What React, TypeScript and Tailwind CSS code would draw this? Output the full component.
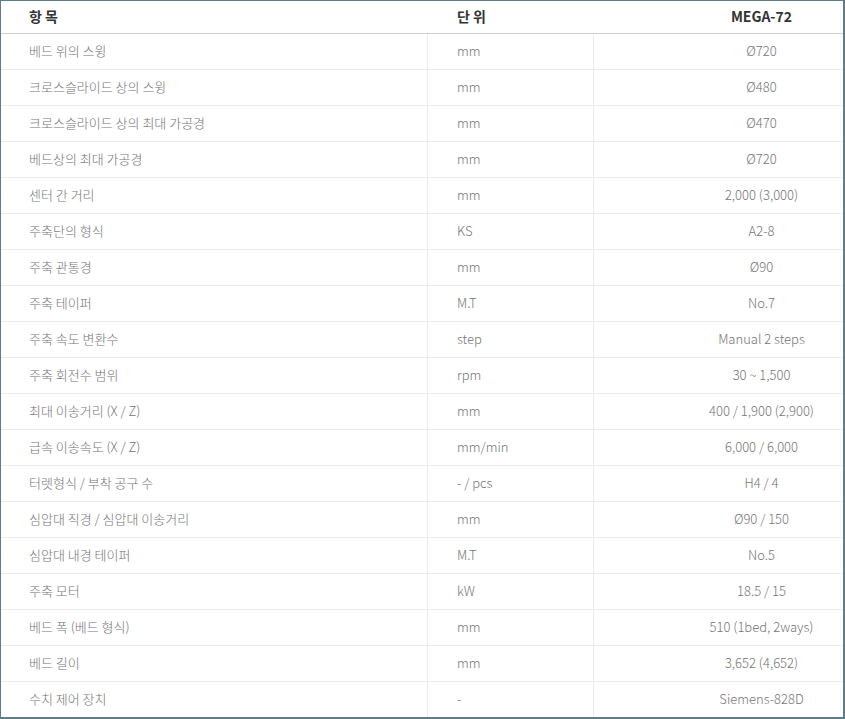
const rows: [string, string, string][] = [
  ['베드 위의 스윙', 'mm', 'Ø720'],
  ['크로스슬라이드 상의 스윙', 'mm', 'Ø480'],
  ['크로스슬라이드 상의 최대 가공경', 'mm', 'Ø470'],
  ['베드상의 최대 가공경', 'mm', 'Ø720'],
  ['센터 간 거리', 'mm', '2,000 (3,000)'],
  ['주축단의 형식', 'KS', 'A2-8'],
  ['주축 관통경', 'mm', 'Ø90'],
  ['주축 테이퍼', 'M.T', 'No.7'],
  ['주축 속도 변환수', 'step', 'Manual 2 steps'],
  ['주축 회전수 범위', 'rpm', '30 ~ 1,500'],
  ['최대 이송거리 (X / Z)', 'mm', '400 / 1,900 (2,900)'],
  ['급속 이송속도 (X / Z)', 'mm/min', '6,000 / 6,000'],
  ['터렛형식 / 부착 공구 수', '- / pcs', 'H4 / 4'],
  ['심압대 직경 / 심압대 이송거리', 'mm', 'Ø90 / 150'],
  ['심압대 내경 테이퍼', 'M.T', 'No.5'],
  ['주축 모터', 'kW', '18.5 / 15'],
  ['베드 폭 (베드 형식)', 'mm', '510 (1bed, 2ways)'],
  ['베드 길이', 'mm', '3,652 (4,652)'],
  ['수치 제어 장치', '-', 'Siemens-828D'],
];

export default function App() {
  return (
    <div className="w-[845px] h-[719px] overflow-hidden bg-white border-t border-l border-r-2 border-b-2 border-[#5f7d87] font-['Noto_Sans_CJK_KR','Open_Sans',sans-serif] text-[13px]">
      {/* Header */}
      <div className="grid grid-cols-[427px_166px_1fr] h-[33px] border-b border-[#cfcfcf] items-center text-[#333] font-bold text-[14px] pb-[2px]">
        <div className="pl-[28px]">항 목</div>
        <div className="pl-[29px]">단 위</div>
        <div className="text-center pl-[86px]">MEGA-72</div>
      </div>

      {/* Rows */}
      {rows.map(([item, unit, value], i) => (
        <div
          key={i}
          className="grid grid-cols-[427px_166px_1fr] h-[36px] border-b border-[#ebebeb] text-[#757575] font-light"
        >
          <div className="flex items-center pl-[28px] pb-[2px] border-r border-[#ebebeb]">{item}</div>
          <div className="flex items-center pl-[29px] pb-[2px] border-r border-[#ebebeb]">{unit}</div>
          <div className="flex items-center justify-center pl-[86px] pb-[2px]">{value}</div>
        </div>
      ))}
    </div>
  );
}
